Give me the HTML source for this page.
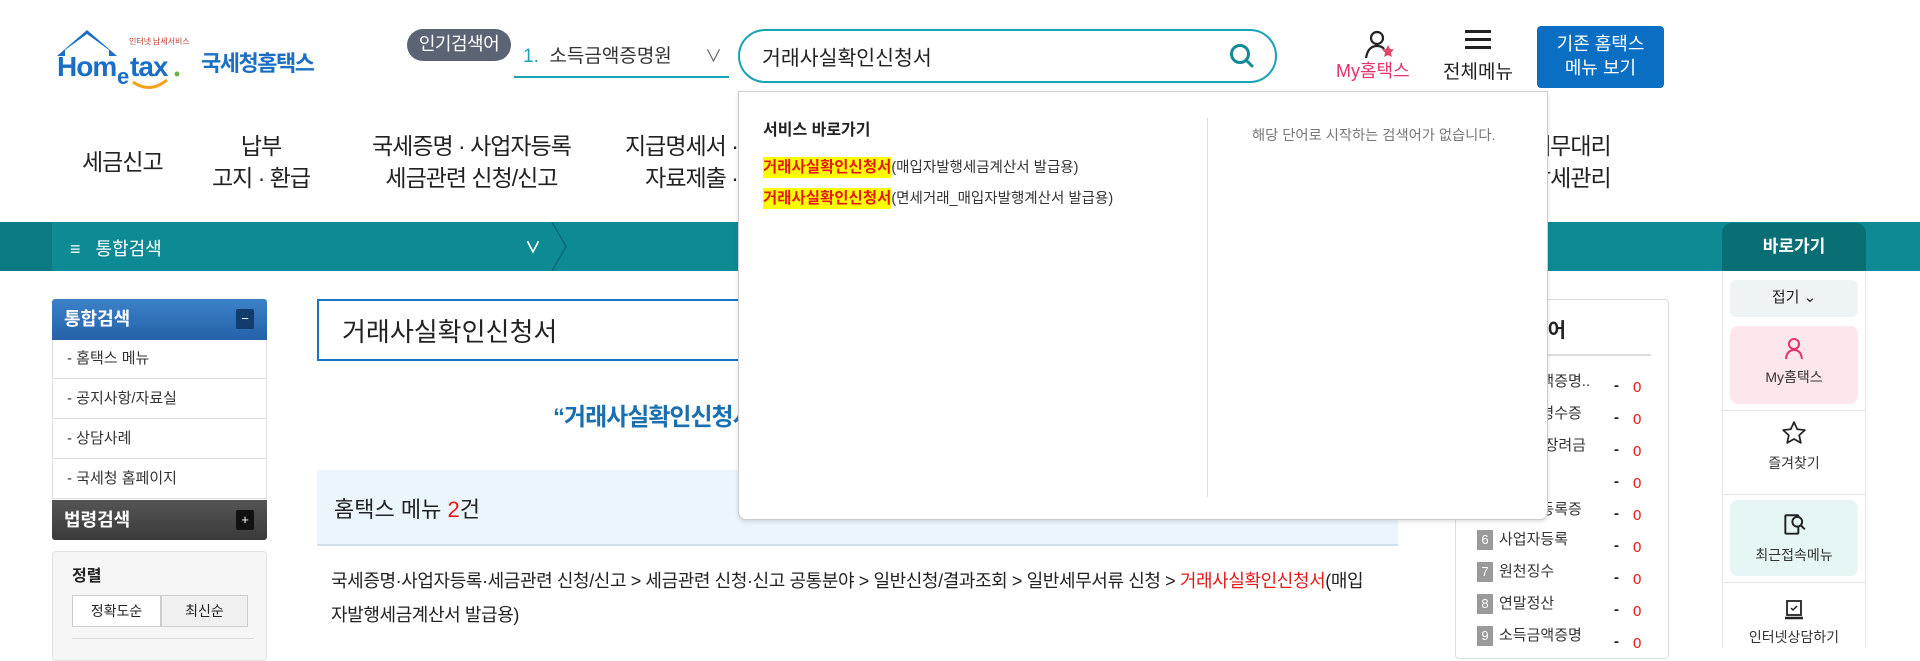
<!DOCTYPE html>
<html><head><meta charset="utf-8"><style>
*{margin:0;padding:0;box-sizing:border-box}
body{width:1920px;height:648px;overflow:hidden;background:#fff;font-family:"Liberation Sans","Noto Sans CJK KR",sans-serif;color:#222;position:relative}
.a{position:absolute;white-space:nowrap}
.nav{font-size:23px;color:#222;text-align:center;line-height:32px;letter-spacing:-1px}
.side{left:52px;width:215px;height:39px;border:1px solid #ddd;border-top:none;font-size:15px;color:#333;line-height:38px;padding-left:14px;background:#fff}
.pop{font-size:15px;color:#333;line-height:20px}
.num{display:inline-block;width:16px;height:20px;background:#9a9a9a;color:#fff;text-align:center;font-size:13px;margin-right:6px}
.rail{left:1722px;width:144px;border-left:1px solid #e5e5e5;border-right:1px solid #e5e5e5}
</style></head><body>

<!-- logo -->
<svg class="a" style="left:55px;top:26px" width="140" height="64" viewBox="0 0 140 64">
<path d="M2 30 L32 4 L62 30 L54 30 L54 24 L32 8 L10 24 L10 30Z" fill="#1a6fc4"/>
<text x="2" y="50" font-family="Liberation Sans" font-weight="bold" font-size="28" fill="#1a6fc4" letter-spacing="-1">Hom</text>
<text x="62" y="58" font-family="Liberation Sans" font-weight="bold" font-size="22" fill="#1a6fc4">e</text>
<text x="75" y="50" font-family="Liberation Sans" font-weight="bold" font-size="28" fill="#1a6fc4" letter-spacing="-1">tax</text>
<circle cx="122" cy="48" r="2.5" fill="#6cb33f"/>
<path d="M78 56 Q95 68 112 54" stroke="#f4a21b" stroke-width="3" fill="none"/>
<text x="74" y="18" font-family="Noto Sans CJK KR" font-size="8" fill="#c0392b">인터넷 납세서비스</text>
</svg>
<div class="a" style="left:201px;top:46px;font-size:22px;font-weight:bold;color:#1a6fc4;letter-spacing:-1.5px">국세청홈택스</div>

<!-- popular -->
<div class="a" style="left:407px;top:29px;width:104px;height:32px;background:#5b6474;border-radius:16px;color:#fff;font-size:18px;text-align:center;line-height:31px;letter-spacing:-0.5px">인기검색어</div>
<div class="a" style="left:523px;top:41px;font-size:19px;color:#333"><span style="color:#1aa3b4">1.</span>&nbsp; 소득금액증명원</div>
<div class="a" style="left:705px;top:42px;font-size:17px;color:#666">∨</div>
<div class="a" style="left:514px;top:76px;width:215px;height:2px;background:#1aa3b4"></div>

<!-- search -->
<div class="a" style="left:738px;top:29px;width:539px;height:54px;border:2px solid #1aa3b4;border-radius:27px"></div>
<div class="a" style="left:762px;top:41px;font-size:20.5px;color:#222">거래사실확인신청서</div>
<svg class="a" style="left:1228px;top:42px" width="28" height="28" viewBox="0 0 28 28"><circle cx="12" cy="12" r="8.5" stroke="#138a95" stroke-width="3" fill="none"/><path d="M18 18L24 24" stroke="#138a95" stroke-width="3" stroke-linecap="round"/></svg>

<!-- my hometax -->
<svg class="a" style="left:1362px;top:28px" width="36" height="32" viewBox="0 0 36 32"><circle cx="15" cy="10" r="6" stroke="#222" stroke-width="2.2" fill="none"/><path d="M4 30 Q6 18 15 18 Q20 18 22 21" stroke="#222" stroke-width="2.2" fill="none"/><path d="M26 17l2 4 4 .5-3 3 .8 4.5-3.8-2-3.8 2 .8-4.5-3-3 4-.5z" fill="#e2476b"/></svg>
<div class="a" style="left:1336px;top:57px;font-size:18px;color:#e2336a">My홈택스</div>
<div class="a" style="left:1465px;top:30px;width:26px;height:3px;background:#222;box-shadow:0 8px 0 #222,0 16px 0 #222"></div>
<div class="a" style="left:1443px;top:57px;font-size:19px;color:#222">전체메뉴</div>
<div class="a" style="left:1537px;top:26px;width:127px;height:62px;background:#0a6fc2;border-radius:4px;color:#fff;font-size:18px;text-align:center;line-height:24px;padding-top:6px">기존 홈택스<br>메뉴 보기</div>

<!-- nav -->
<div class="a nav" style="left:82px;top:146px">세금신고</div>
<div class="a nav" style="left:212px;top:130px">납부<br>고지 · 환급</div>
<div class="a nav" style="left:372px;top:130px">국세증명 · 사업자등록<br>세금관련 신청/신고</div>
<div class="a nav" style="left:625px;top:130px">지급명세서 · 지급명세서<br>자료제출 · 공익법인</div>
<div class="a nav" style="left:1530px;top:130px">세무대리<br>납세관리</div>

<!-- teal bar -->
<div class="a" style="left:0;top:222px;width:1920px;height:49px;background:#0e8a94"></div>
<div class="a" style="left:0;top:222px;width:52px;height:49px;background:#0c7a83"></div>
<div class="a" style="left:70px;top:235px;font-size:18px;color:#fff">≡&nbsp;&nbsp; 통합검색</div>
<div class="a" style="left:525px;top:234px;font-size:16px;color:#fff;font-weight:bold">∨</div>
<svg class="a" style="left:550px;top:222px" width="20" height="49"><path d="M2 0L16 24.5L2 49" stroke="#0a6a72" stroke-width="1.5" fill="none"/></svg>
<div class="a" style="left:1722px;top:223px;width:144px;height:48px;background:#0a6e75;border-radius:10px 10px 0 0;color:#fff;font-size:17px;font-weight:bold;text-align:center;line-height:48px">바로가기</div>

<!-- left sidebar -->
<div class="a" style="left:52px;top:299px;width:215px;height:41px;background:linear-gradient(#3c82c9,#2461a8);border-radius:3px 3px 0 0;color:#fff;font-size:18px;font-weight:bold;line-height:40px;padding-left:12px">통합검색</div>
<div class="a" style="left:236px;top:309px;width:18px;height:20px;background:#123c6c;border-radius:2px;color:#fff;font-size:13px;text-align:center;line-height:19px">−</div>
<div class="a side" style="top:340px">- 홈택스 메뉴</div>
<div class="a side" style="top:380px">- 공지사항/자료실</div>
<div class="a side" style="top:420px">- 상담사례</div>
<div class="a side" style="top:460px">- 국세청 홈페이지</div>
<div class="a" style="left:52px;top:500px;width:215px;height:40px;background:linear-gradient(#555,#3a3a3a);border-radius:0 0 3px 3px;color:#fff;font-size:18px;font-weight:bold;line-height:40px;padding-left:12px">법령검색</div>
<div class="a" style="left:236px;top:510px;width:18px;height:20px;background:#111;border-radius:2px;color:#fff;font-size:13px;text-align:center;line-height:19px">+</div>
<div class="a" style="left:52px;top:551px;width:215px;height:110px;background:#f6f6f6;border:1px solid #e2e2e2;border-radius:4px"></div>
<div class="a" style="left:72px;top:562px;font-size:16px;font-weight:bold">정렬</div>
<div class="a" style="left:72px;top:595px;width:89px;height:32px;background:#fff;border:1px solid #ccc;font-size:14px;text-align:center;line-height:30px">정확도순</div>
<div class="a" style="left:161px;top:595px;width:87px;height:32px;background:#f0f0f0;border:1px solid #ccc;font-size:14px;text-align:center;line-height:30px">최신순</div>
<div class="a" style="left:72px;top:638px;width:182px;height:1px;background:#ddd"></div>

<!-- main -->
<div class="a" style="left:317px;top:299px;width:500px;height:62px;border:2px solid #1a73c4;border-right:none"></div>
<div class="a" style="left:342px;top:312px;font-size:26px;color:#222">거래사실확인신청서</div>
<div class="a" style="left:553px;top:397px;font-size:24px;font-weight:bold;color:#1a6fb0;letter-spacing:-1px">“거래사실확인신청서”</div>
<div class="a" style="left:317px;top:470px;width:1081px;height:76px;background:#eaf5fc;border-bottom:2px solid #cfe0ec"></div>
<div class="a" style="left:334px;top:492px;font-size:22px;color:#222">홈택스 메뉴 <span style="color:#e31b1b">2</span>건</div>
<div class="a" style="left:331px;top:567px;font-size:18px;color:#222;letter-spacing:-0.4px">국세증명·사업자등록·세금관련 신청/신고 &gt; 세금관련 신청·신고 공통분야 &gt; 일반신청/결과조회 &gt; 일반세무서류 신청 &gt; <span style="color:#e31b1b">거래사실확인신청서</span>(매입</div>
<div class="a" style="left:331px;top:601px;font-size:18px;color:#222;letter-spacing:-0.4px">자발행세금계산서 발급용)</div>

<!-- popular keyword box -->
<div class="a" style="left:1455px;top:299px;width:214px;height:360px;border:1px solid #ddd;border-radius:4px"></div>
<div class="a" style="left:1474px;top:314px;font-size:20px;font-weight:bold">인기검색어</div>
<div class="a" style="left:1475px;top:354px;width:176px;height:2px;background:#ddd"></div>
<div class="a pop" style="left:1477px;top:372px"><span class="num">1</span>소득금액증명..</div>
<div class="a pop" style="left:1477px;top:404px"><span class="num">2</span>납세증명수증</div>
<div class="a pop" style="left:1477px;top:436px"><span class="num">3</span>환급금/장려금</div>
<div class="a pop" style="left:1477px;top:468px"><span class="num">4</span>부가세</div>
<div class="a pop" style="left:1477px;top:500px"><span class="num">5</span>사업자등록증</div>
<div class="a pop" style="left:1477px;top:530px"><span class="num">6</span>사업자등록</div>
<div class="a pop" style="left:1477px;top:562px"><span class="num">7</span>원천징수</div>
<div class="a pop" style="left:1477px;top:594px"><span class="num">8</span>연말정산</div>
<div class="a pop" style="left:1477px;top:626px"><span class="num">9</span>소득금액증명</div>
<div class="a" style="left:1614px;top:370px;font-size:15px;line-height:32px;font-weight:bold">-<br>-<br>-<br>-<br>-<br>-<br>-<br>-<br>-</div>
<div class="a" style="left:1633px;top:372px;font-size:15px;line-height:32px;color:#e31b1b">0<br>0<br>0<br>0<br>0<br>0<br>0<br>0<br>0</div>

<!-- right rail -->
<div class="a rail" style="top:271px;height:377px"></div>
<div class="a" style="left:1730px;top:280px;width:128px;height:37px;background:#eef3f3;border-radius:6px;font-size:15px;text-align:center;line-height:36px">접기 ⌄</div>
<div class="a" style="left:1730px;top:326px;width:128px;height:78px;background:#fde7ec;border-radius:8px;text-align:center;font-size:14px;color:#333">
<svg style="margin-top:10px" width="24" height="24" viewBox="0 0 24 24"><circle cx="12" cy="8" r="5" stroke="#e2336a" stroke-width="2" fill="none"/><path d="M4 23 Q5 14 12 14 Q19 14 20 23" stroke="#e2336a" stroke-width="2" fill="none"/></svg><div style="margin-top:4px">My홈택스</div></div>
<div class="a" style="left:1722px;top:410px;width:144px;height:1px;background:#e5e5e5"></div>
<div class="a" style="left:1730px;top:420px;width:128px;height:70px;text-align:center;font-size:14px;color:#333">
<svg width="26" height="26" viewBox="0 0 24 24"><path d="M12 2l3 6.5 7 .8-5.2 4.8 1.5 7-6.3-3.6-6.3 3.6 1.5-7L2 9.3l7-.8z" stroke="#222" stroke-width="1.6" fill="none" stroke-linejoin="round"/></svg><div style="margin-top:4px">즐겨찾기</div></div>
<div class="a" style="left:1722px;top:494px;width:144px;height:1px;background:#e5e5e5"></div>
<div class="a" style="left:1730px;top:500px;width:128px;height:76px;background:#e6f5f6;border-radius:8px;text-align:center;font-size:14px;color:#333">
<svg style="margin-top:12px" width="26" height="26" viewBox="0 0 24 24"><rect x="4" y="3" width="12" height="17" rx="1" stroke="#222" stroke-width="1.8" fill="none"/><circle cx="15" cy="9" r="4.5" stroke="#222" stroke-width="1.8" fill="#e6f5f6"/><path d="M18 12l4 4" stroke="#222" stroke-width="1.8"/></svg><div style="margin-top:4px">최근접속메뉴</div></div>
<div class="a" style="left:1722px;top:582px;width:144px;height:1px;background:#e5e5e5"></div>
<div class="a" style="left:1730px;top:598px;width:128px;height:50px;text-align:center;font-size:14px;color:#333">
<svg width="26" height="24" viewBox="0 0 24 24"><rect x="5" y="3" width="14" height="14" stroke="#222" stroke-width="1.8" fill="none"/><path d="M3 20h18" stroke="#222" stroke-width="2.5"/><path d="M9 10l2 2 4-4" stroke="#222" stroke-width="1.5" fill="none"/></svg><div style="margin-top:2px">인터넷상담하기</div></div>

<!-- dropdown -->
<div class="a" style="left:738px;top:91px;width:810px;height:429px;background:#fff;border:1px solid #ccc;border-radius:0 0 8px 8px;box-shadow:0 2px 4px rgba(0,0,0,.12);z-index:5">
<div class="a" style="left:24px;top:24px;font-size:16px;font-weight:bold;color:#222">서비스 바로가기</div>
<div class="a" style="left:24px;top:63px;font-size:14.5px;color:#333"><span style="background:#ffff00;color:#e31b1b;font-weight:bold;font-size:15.5px;padding:2px 0">거래사실확인신청서</span>(매입자발행세금계산서 발급용)</div>
<div class="a" style="left:24px;top:94px;font-size:14.5px;color:#333"><span style="background:#ffff00;color:#e31b1b;font-weight:bold;font-size:15.5px;padding:2px 0">거래사실확인신청서</span>(면세거래_매입자발행계산서 발급용)</div>
<div class="a" style="left:468px;top:26px;width:1px;height:379px;background:#ddd"></div>
<div class="a" style="left:513px;top:32px;font-size:14.3px;color:#777">해당 단어로 시작하는 검색어가 없습니다.</div>
</div>
</body></html>
